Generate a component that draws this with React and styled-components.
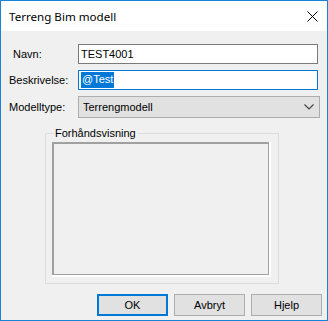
import React from "react";
import styled, { createGlobalStyle } from "styled-components";

const Global = createGlobalStyle`
  html, body { margin: 0; padding: 0; background: #f0f0f0; }
  * { box-sizing: border-box; }
`;

const Window = styled.div`
  width: 328px;
  height: 321px;
  border: 1px solid #1883d7;
  display: flex;
  flex-direction: column;
  background: #f0f0f0;
  font-family: "Liberation Sans", Arial, sans-serif;
  font-size: 11px;
  color: #000;
`;

const TitleBar = styled.div`
  height: 30px;
  flex: none;
  background: #fff;
  display: flex;
  align-items: center;
  justify-content: space-between;
  padding: 0 9px 0 8px;
`;

const Title = styled.div`
  font-family: "Noto Sans", "Segoe UI", sans-serif;
  font-size: 11.6px;
  color: #000;
  margin-top: 1px;
`;

const CloseIcon = styled.svg`
  width: 11px;
  height: 11px;
  display: block;
  margin-top: 1px;
`;

const Body = styled.div`
  flex: 1;
  display: flex;
  flex-direction: column;
  padding: 13px 5px 0 0;
`;

const Form = styled.div`
  display: grid;
  grid-template-columns: 69px auto;
  row-gap: 6px;
  margin-left: 8px;
  align-items: center;
`;

const Label = styled.label`
  padding-left: ${(p) => p.$indent || 0}px;
  white-space: nowrap;
  line-height: 13px;
`;

const TextBox = styled.div`
  width: 240px;
  height: 20px;
  background: #fff;
  border: 1px solid ${(p) => (p.$focused ? "#0078d7" : "#7a7a7a")};
  display: flex;
  align-items: center;
  padding-left: 2px;
  line-height: 13px;
`;

const Selected = styled.span`
  background: #0078d7;
  color: #fff;
  padding: 1px 1px 2px 1px;
`;

const Select = styled.div`
  width: 242px;
  height: 22px;
  background: #e1e1e1;
  border: 1px solid #adadad;
  display: flex;
  align-items: center;
  justify-content: space-between;
  padding: 0 5px 0 4px;
  line-height: 13px;
`;

const Chevron = styled.svg`
  width: 10px;
  height: 6px;
  display: block;
`;

const Group = styled.fieldset`
  margin: 9px 0 0 44px;
  width: 234px;
  height: 157px;
  border: 1px solid #dcdcdc;
  padding: 3px 0 0 6px;
  min-width: 0;
`;

const Legend = styled.legend`
  margin-left: 2px;
  padding: 0 1px;
  line-height: 12px;
  font-size: 11px;
`;

const PreviewOuter = styled.div`
  width: 219px;
  height: 135px;
  border-right: 2px solid #fff;
  border-bottom: 2px solid #fff;
`;

const PreviewInner = styled.div`
  width: 100%;
  height: 100%;
  border-top: 2px solid #a0a0a0;
  border-left: 2px solid #a0a0a0;
  border-right: 1px solid #a0a0a0;
  border-bottom: 1px solid #a0a0a0;
  background: #f0f0f0;
`;

const Buttons = styled.div`
  display: flex;
  justify-content: flex-end;
  gap: 6px;
  margin-top: 10px;
`;

const Button = styled.button`
  width: 71px;
  height: 22px;
  background: #e1e1e1;
  border: ${(p) => (p.$default ? "2px solid #0078d7" : "1px solid #adadad")};
  font-family: "Liberation Sans", Arial, sans-serif;
  font-size: 11px;
  color: #000;
  padding: 0;
  margin: 0;
`;

export default function App() {
  return (
    <>
      <Global />
      <Window>
        <TitleBar>
          <Title>Terreng Bim modell</Title>
          <CloseIcon viewBox="0 0 11 11">
            <path d="M0.5 0.5 L10.5 10.5 M10.5 0.5 L0.5 10.5" stroke="#000" strokeWidth="1" fill="none" />
          </CloseIcon>
        </TitleBar>
        <Body>
          <Form>
            <Label $indent={4}>Navn:</Label>
            <TextBox>TEST4001</TextBox>
            <Label>Beskrivelse:</Label>
            <TextBox $focused>
              <Selected>@Test</Selected>
            </TextBox>
            <Label>Modelltype:</Label>
            <Select>
              <span>Terrengmodell</span>
              <Chevron viewBox="0 0 10 6">
                <path d="M0.5 0.5 L5 5 L9.5 0.5" stroke="#444" strokeWidth="1.2" fill="none" />
              </Chevron>
            </Select>
          </Form>
          <Group>
            <Legend>Forhåndsvisning</Legend>
            <PreviewOuter>
              <PreviewInner />
            </PreviewOuter>
          </Group>
          <Buttons>
            <Button $default>OK</Button>
            <Button>Avbryt</Button>
            <Button>Hjelp</Button>
          </Buttons>
        </Body>
      </Window>
    </>
  );
}
